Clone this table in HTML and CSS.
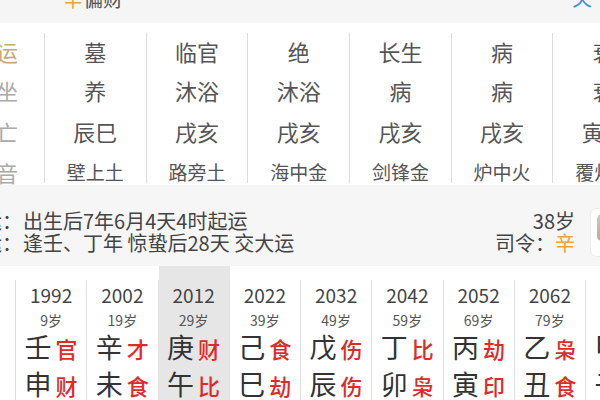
FILE: index.html
```html
<!DOCTYPE html>
<html lang="zh">
<head>
<meta charset="utf-8">
<link rel="stylesheet" href="styles.css">
</head>
<body>
<div class="topbar">
  <div class="tb-left"><span class="orange">辛</span>偏财</div>
  <div class="tb-right">关</div>
</div>

<div class="table">
  <div class="tcol lbl">
    <div class="r1 tan">星运</div>
    <div class="r2">自坐</div>
    <div class="r3">空亡</div>
    <div class="r4 big4">纳音</div>
  </div>
  <div class="tcol">
    <div class="r1">墓</div><div class="r2">养</div><div class="r3">辰巳</div><div class="r4">壁上土</div>
  </div>
  <div class="tcol">
    <div class="r1">临官</div><div class="r2">沐浴</div><div class="r3">戌亥</div><div class="r4">路旁土</div>
  </div>
  <div class="tcol">
    <div class="r1">绝</div><div class="r2">沐浴</div><div class="r3">戌亥</div><div class="r4">海中金</div>
  </div>
  <div class="tcol">
    <div class="r1">长生</div><div class="r2">病</div><div class="r3">戌亥</div><div class="r4">剑锋金</div>
  </div>
  <div class="tcol">
    <div class="r1">病</div><div class="r2">病</div><div class="r3">戌亥</div><div class="r4">炉中火</div>
  </div>
  <div class="tcol">
    <div class="r1">衰</div><div class="r2">衰</div><div class="r3">寅卯</div><div class="r4">覆灯火</div>
  </div>
</div>

<div class="info">
  <div class="info-left">
    <div class="info-row"><span class="info-lbl">起运：</span><span>出生后7年6月4天4时起运</span></div>
    <div class="info-row"><span class="info-lbl">交运：</span><span>逢壬、丁年 惊蛰后28天 交大运</span></div>
  </div>
  <div class="info-right">
    <div>38岁</div>
    <div>司令：<span class="orange">辛</span></div>
  </div>
  <div class="card"><div class="card-inner"></div></div>
</div>

<div class="dayun">
  <div class="dcol"><div class="dinner">
    <div class="year">&nbsp;</div><div class="age">&nbsp;</div>
    <div class="gz">癸</div><div class="gz">酉</div>
  </div></div>
  <div class="dcol"><div class="dinner">
    <div class="year">1992</div><div class="age">9岁</div>
    <div class="gz">壬<span class="ss">官</span></div><div class="gz">申<span class="ss">财</span></div>
  </div></div>
  <div class="dcol"><div class="dinner">
    <div class="year">2002</div><div class="age">19岁</div>
    <div class="gz">辛<span class="ss">才</span></div><div class="gz">未<span class="ss">食</span></div>
  </div></div>
  <div class="dcol active"><div class="dinner">
    <div class="year">2012</div><div class="age">29岁</div>
    <div class="gz">庚<span class="ss">财</span></div><div class="gz">午<span class="ss">比</span></div>
  </div></div>
  <div class="dcol"><div class="dinner">
    <div class="year">2022</div><div class="age">39岁</div>
    <div class="gz">己<span class="ss">食</span></div><div class="gz">巳<span class="ss">劫</span></div>
  </div></div>
  <div class="dcol"><div class="dinner">
    <div class="year">2032</div><div class="age">49岁</div>
    <div class="gz">戊<span class="ss">伤</span></div><div class="gz">辰<span class="ss">伤</span></div>
  </div></div>
  <div class="dcol"><div class="dinner">
    <div class="year">2042</div><div class="age">59岁</div>
    <div class="gz">丁<span class="ss">比</span></div><div class="gz">卯<span class="ss">枭</span></div>
  </div></div>
  <div class="dcol"><div class="dinner">
    <div class="year">2052</div><div class="age">69岁</div>
    <div class="gz">丙<span class="ss">劫</span></div><div class="gz">寅<span class="ss">印</span></div>
  </div></div>
  <div class="dcol"><div class="dinner">
    <div class="year">2062</div><div class="age">79岁</div>
    <div class="gz">乙<span class="ss">枭</span></div><div class="gz">丑<span class="ss">食</span></div>
  </div></div>
  <div class="dcol"><div class="dinner">
    <div class="year">2072</div><div class="age">89岁</div>
    <div class="gz">甲<span class="ss">印</span></div><div class="gz">子<span class="ss">官</span></div>
  </div></div>
</div>
</body>
</html>
```

FILE: styles.css
```css
html, body {
  margin: 0;
  padding: 0;
}
body {
  width: 600px;
  height: 400px;
  overflow: hidden;
  background: #fff;
  font-family: "Noto Sans CJK SC", "Noto Sans", sans-serif;
  color: #555;
}

.orange { color: #eea33a; }

/* top bar */
.topbar {
  height: 23px;
  background: #f5f5f5;
  display: flex;
  justify-content: space-between;
  overflow: hidden;
  font-size: 20px;
  line-height: 20px;
  color: #555;
}
.tb-left {
  margin-top: -11px;
  margin-left: 63px;
}
.tb-right {
  margin-top: -12px;
  margin-right: 8px;
  color: #3d8ee8;
}

/* 4-row table */
.table {
  display: flex;
  padding-top: 10px;
  padding-bottom: 2px;
  margin-left: -52px;
  background: #fff;
}
.tcol {
  flex: none;
  width: 101.7px;
  height: 150px;
  box-sizing: border-box;
  border-right: 1px solid #dcdcdc;
  text-align: center;
  color: #555;
  white-space: nowrap;
}
.tcol.lbl {
  width: 97px;
  color: #aaa;
}
.tcol .tan { color: #c9a878; }
.r1, .r2, .r3 { font-size: 22px; }
.r1 { height: 37px; line-height: 37px; }
.r2 { height: 41px; line-height: 41px; }
.r3 { height: 41px; line-height: 41px; }
.r4 {
  font-size: 19px;
  height: 23px;
  line-height: 24px;
  padding-top: 8px;
}
.lbl .big4 { font-size: 22px; }

/* info block */
.info {
  height: 81px;
  background: #f6f6f6;
  display: flex;
  align-items: flex-start;
  font-size: 20px;
  line-height: 22px;
  color: #444;
}
.info-left {
  flex: 1;
  padding-top: 25px;
  margin-left: -38px;
}
.info-row {
  display: flex;
  gap: 1px;
  white-space: nowrap;
}
.info-lbl { width: 60px; }
.info-right {
  padding-top: 25px;
  text-align: right;
  white-space: nowrap;
}
.card {
  flex: none;
  width: 60px;
  height: 49px;
  margin-top: 23px;
  margin-left: 15px;
  margin-right: -50px;
  box-sizing: border-box;
  background: #fff;
  border: 1px solid #ececec;
  border-radius: 7px;
  padding: 5px 0 0 6px;
}
.card-inner {
  width: 40px;
  height: 27px;
  border-radius: 5px;
  background: linear-gradient(#d8ccb4, #b9a88a);
}

/* dayun */
.dayun {
  display: flex;
  margin-left: -55.25px;
  height: 134px;
  background: #fff;
}
.dcol {
  flex: none;
  width: 71.25px;
  background: #fff;
}
.dcol.active { background: #e6e6e6; }
.dinner {
  margin-top: 14px;
  height: 130px;
  box-sizing: border-box;
  border-right: 1px solid #e0e0e0;
  text-align: center;
  white-space: nowrap;
}
.year {
  padding-top: 4px;
  font-size: 19px;
  line-height: 22px;
  color: #444;
}
.age {
  margin-top: 5px;
  font-size: 14px;
  line-height: 18px;
  color: #555;
}
.gz {
  font-size: 27px;
  line-height: 36px;
  color: #333;
}
.gz:first-of-type { margin-top: 3px; }
.ss {
  font-size: 22px;
  color: #e02a2a;
  margin-left: 4px;
  font-weight: 500;
}
```
